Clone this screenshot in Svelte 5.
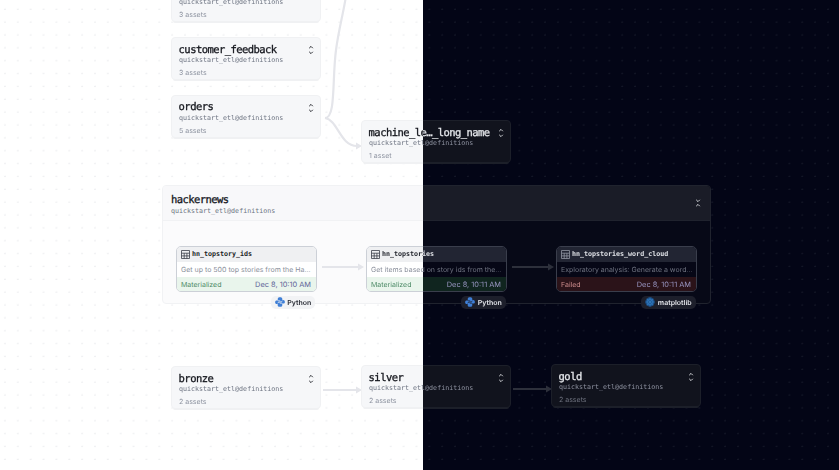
<script>
  const sub = 'quickstart_etl@definitions';
  const groups = [
    { x: 171, y: -21, title: '', assets: '3 assets' },
    { x: 171, y: 37, title: 'customer_feedback', assets: '3 assets' },
    { x: 171, y: 94.5, title: 'orders', assets: '5 assets' },
    { x: 361, y: 120, title: 'machine_le…_long_name', assets: '1 asset' },
    { x: 171, y: 366, title: 'bronze', assets: '2 assets' },
    { x: 361, y: 365, title: 'silver', assets: '2 assets' },
    { x: 551, y: 364, title: 'gold', assets: '2 assets' }
  ];
  const assets = [
    { x: 176, name: 'hn_topstory_ids', desc: 'Get up to 500 top stories from the Ha...', status: 'Materialized', date: 'Dec 8, 10:10 AM', kind: 'ok', tag: 'Python', tagX: 271, tagW: 44 },
    { x: 366, name: 'hn_topstories', desc: 'Get items based on story ids from the...', status: 'Materialized', date: 'Dec 8, 10:11 AM', kind: 'ok', tag: 'Python', tagX: 461, tagW: 45 },
    { x: 556, name: 'hn_topstories_word_cloud', desc: 'Exploratory analysis: Generate a word...', status: 'Failed', date: 'Dec 8, 10:11 AM', kind: 'bad', tag: 'matplotlib', tagX: 641, tagW: 55 }
  ];
  const edges = [
    'M325 118 C336 118 332 80 336 50 C339 28 343 15 346 -4',
    'M325 118 C338 120 340 146 357 146',
    'M322 267 H360',
    'M512 267 H550',
    'M323 390 H358',
    'M513 389 H548'
  ];
  const heads = [[362, 146], [364, 267], [554, 267], [362, 390], [552, 389]];
</script>

{#snippet canvas()}
  <div class="canvas">
    <svg class="edges" width="839" height="470" viewBox="0 0 839 470">
      {#each edges as d}
        <path {d} />
      {/each}
      {#each heads as [x, y]}
        <polygon points="{x},{y} {x - 6},{y - 3.5} {x - 6},{y + 3.5}" />
      {/each}
    </svg>

    <section class="group">
      <header>
        <div class="title">hackernews</div>
        <div class="sub">{sub}</div>
        <svg class="chev" width="6" height="8" viewBox="0 0 6 8"><path d="M1.2 .8 3 2.600 4.800 .8M1.200 7.200 3 5.400 4.800 7.200" /></svg>
      </header>
    </section>

    {#each groups as g}
      <div class="node" style="left:{g.x}px;top:{g.y}px">
        <div class="title">{g.title}</div>
        <div class="sub">{sub}</div>
        <div class="count">{g.assets}</div>
        <svg class="chev" width="6" height="10" viewBox="0 0 6 10"><path d="M1.200 3.200 3 1.400 4.800 3.200M1.200 6.800 3 8.600 4.800 6.800" /></svg>
      </div>
    {/each}

    {#each assets as a}
      <div class="asset" style="left:{a.x}px">
        <div class="asset-head">
          <svg width="9" height="9" viewBox="0 0 9 9"><path d="M.5.5h8v8h-8zM.5 3.200h8M.5 5.900h8M3.200 3.200v5.300M5.900 3.200v5.300" /></svg>
          <span>{a.name}</span>
        </div>
        <div class="asset-desc">{a.desc}</div>
        <div class="asset-status {a.kind}">
          <span class="state">{a.status}</span>
          <span class="date">{a.date}</span>
        </div>
      </div>
      <div class="tag" style="left:{a.tagX}px;width:{a.tagW}px">
        {#if a.tag === 'Python'}
          <svg width="10" height="10" viewBox="0 0 16 16"><path class="py" d="M8 .3C5.400.3 4.400 1.400 4.400 3v1.800H8.300v.7H2.800C1.100 5.500.2 6.600.2 8.200s.9 3 2.600 3H4.400V9.400c0-1.300 1-2.200 2.300-2.200h2.900c1.200 0 2.100-.9 2.100-2.100V3C11.700 1.400 10.500.3 8 .3Z" /><path class="py" d="M8 15.700c2.600 0 3.600-1.100 3.600-2.700v-1.800H7.700v-.7h5.500c1.700 0 2.600-1.100 2.600-2.700s-.9-3-2.600-3H11.600v1.800c0 1.300-1 2.200-2.300 2.200H6.400c-1.200 0-2.100.9-2.100 2.100V13c0 1.600 1.200 2.700 3.700 2.700Z" /></svg>
        {:else}
          <svg width="10" height="10" viewBox="0 0 16 16"><circle class="mpl-bg" cx="8" cy="8" r="7.500" /><circle class="mpl" cx="8" cy="8" r="4.500" /><path class="mpl" d="M8 1v14M1 8h14M3 3l10 10M13 3 3 13" /></svg>
        {/if}
        <span>{a.tag}</span>
      </div>
    {/each}
  </div>
{/snippet}

<div class="page">
  <div class="pane light">{@render canvas()}</div>
  <div class="pane dark">{@render canvas()}</div>
</div>

<style>
  :global(body) {
    margin: 0;
  }
  .page {
    display: flex;
    width: 839px;
    height: 470px;
    overflow: hidden;
    text-rendering: geometricPrecision;
  }
  .pane {
    position: relative;
    overflow: hidden;
    height: 470px;
    background-color: var(--bg);
  }
  .light {
    width: 423px;
    --bg: #ffffff;
    --dot: #eff0f2;
    --node: #f6f7f9;
    --node-line: #f0f1f3;
    --edge: #e4e5ea;
    --title: #14161d;
    --sub: #6d7482;
    --count: #8d93a0;
    --group: #fbfbfc;
    --group-head: #f8f8fa;
    --group-line: #f1f2f4;
    --asset-line: #ccd0d7;
    --asset-head: #eff0f2;
    --asset-body: #ffffff;
    --asset-title: #1b1e26;
    --desc: #8a8f9b;
    --ok: #e9f5ec;
    --ok-text: #4c8a66;
    --bad: #fae9ea;
    --bad-text: #c25c5c;
    --date: #5c6297;
    --tag: #f2f3f5;
    --tag-text: #2a2d36;
    --py: #3f7fd6;
    --icon: #3a3e48;
  }
  .dark {
    width: 416px;
    --bg: #030516;
    --dot: #141727;
    --node: #11131d;
    --node-line: #1c1f29;
    --edge: #2d303b;
    --title: #e4e6ea;
    --sub: #8e92a0;
    --count: #6e727f;
    --group: #070917;
    --group-head: #1a1c27;
    --group-line: #20232e;
    --asset-line: #3a3e4c;
    --asset-head: #222533;
    --asset-body: #060716;
    --asset-title: #dfe1e6;
    --desc: #6f7380;
    --ok: #10251f;
    --ok-text: #5aa57f;
    --bad: #2b1319;
    --bad-text: #c98a8a;
    --date: #9a97c4;
    --tag: #1d1f2b;
    --tag-text: #e2e4e9;
    --py: #3f7fd6;
    --icon: #9195a2;
  }
  .canvas {
    position: absolute;
    top: 0;
    left: 0;
    width: 839px;
    height: 470px;
    filter: blur(0.3px);
    background-image: radial-gradient(circle at 5px 9.300px, var(--dot) 0.8px, transparent 1.100px);
    background-size: 12.870px 12.870px;
  }
  .dark .canvas {
    left: -423px;
  }
  .edges {
    position: absolute;
    top: 0;
    left: 0;
    z-index: 2;
  }
  .edges path {
    fill: none;
    stroke: var(--edge);
    stroke-width: 2.200;
  }
  .edges polygon {
    fill: var(--edge);
  }
  .title {
    font: 500 10.500px/12px "DejaVu Sans Mono", monospace;
    letter-spacing: -0.560px;
    color: var(--title);
    white-space: nowrap;
    -webkit-text-stroke: 0.300px var(--title);
  }
  .node .title {
    height: 12px;
    padding-top: 0.700px;
    margin-bottom: -0.700px;
    margin-left: -0.400px;
  }
  .sub {
    font: 400 6.660px/10px "DejaVu Sans Mono", monospace;
    color: var(--sub);
    white-space: nowrap;
  }
  .chev {
    position: absolute;
    fill: none;
    stroke: var(--title);
    stroke-width: 0.900;
  }
  .group {
    position: absolute;
    left: 162px;
    top: 185px;
    width: 547px;
    height: 117px;
    background: var(--group);
    border: 1px solid var(--group-line);
    border-radius: 4px;
    overflow: hidden;
  }
  .group header {
    position: relative;
    height: 35px;
    padding: 8px 8px 0;
    box-sizing: border-box;
    background: var(--group-head);
    border-bottom: 1px solid var(--group-line);
  }
  .group .chev {
    left: 532px;
    top: 13px;
  }
  .node {
    position: absolute;
    z-index: 3;
    box-sizing: border-box;
    width: 150px;
    height: 43px;
    padding: 5px 7px 0;
    background: var(--node);
    border: 1px solid var(--node-line);
    border-radius: 4px;
    box-shadow: 0 3px 0 -2px var(--node-line), 0 5px 0 -4px var(--node-line);
  }
  .node .chev {
    right: 6px;
    top: 7px;
  }
  .count {
    margin-top: 3px;
    font: 400 7px/10px Inter, sans-serif;
    color: var(--count);
  }
  .asset {
    position: absolute;
    z-index: 3;
    top: 246px;
    box-sizing: border-box;
    width: 141px;
    height: 45.500px;
    display: flex;
    flex-direction: column;
    border: 1px solid var(--asset-line);
    border-radius: 5px;
    overflow: hidden;
    font: 400 7px/15px Inter, sans-serif;
  }
  .asset-head {
    display: flex;
    align-items: center;
    gap: 2px;
    height: 15px;
    padding-left: 4px;
    background: var(--asset-head);
    font: 700 6.660px/15px "DejaVu Sans Mono", monospace;
    color: var(--asset-title);
    white-space: nowrap;
  }
  .asset-head svg {
    fill: none;
    stroke: var(--icon);
    stroke-width: 0.800;
  }
  .asset-desc {
    height: 15px;
    padding-left: 4px;
    background: var(--asset-body);
    color: var(--desc);
    white-space: nowrap;
  }
  .asset-status {
    flex: 1;
    display: flex;
    justify-content: space-between;
    padding: 0 5px 0 4px;
  }
  .asset-status.ok {
    background: var(--ok);
    color: var(--ok-text);
  }
  .asset-status.bad {
    background: var(--bad);
    color: var(--bad-text);
  }
  .date {
    color: var(--date);
    font-size: 7.400px;
  }
  .tag {
    position: absolute;
    z-index: 3;
    top: 295.500px;
    height: 13px;
    box-sizing: border-box;
    display: flex;
    align-items: center;
    justify-content: center;
    gap: 2.500px;
    background: var(--tag);
    border-radius: 5px;
    font: 600 7px/13px Inter, sans-serif;
    color: var(--tag-text);
  }
  .py {
    fill: var(--py);
  }
  .mpl-bg {
    fill: #1c4f86;
  }
  .mpl {
    fill: none;
    stroke: #2f78bd;
    stroke-width: 1.200;
  }
</style>
